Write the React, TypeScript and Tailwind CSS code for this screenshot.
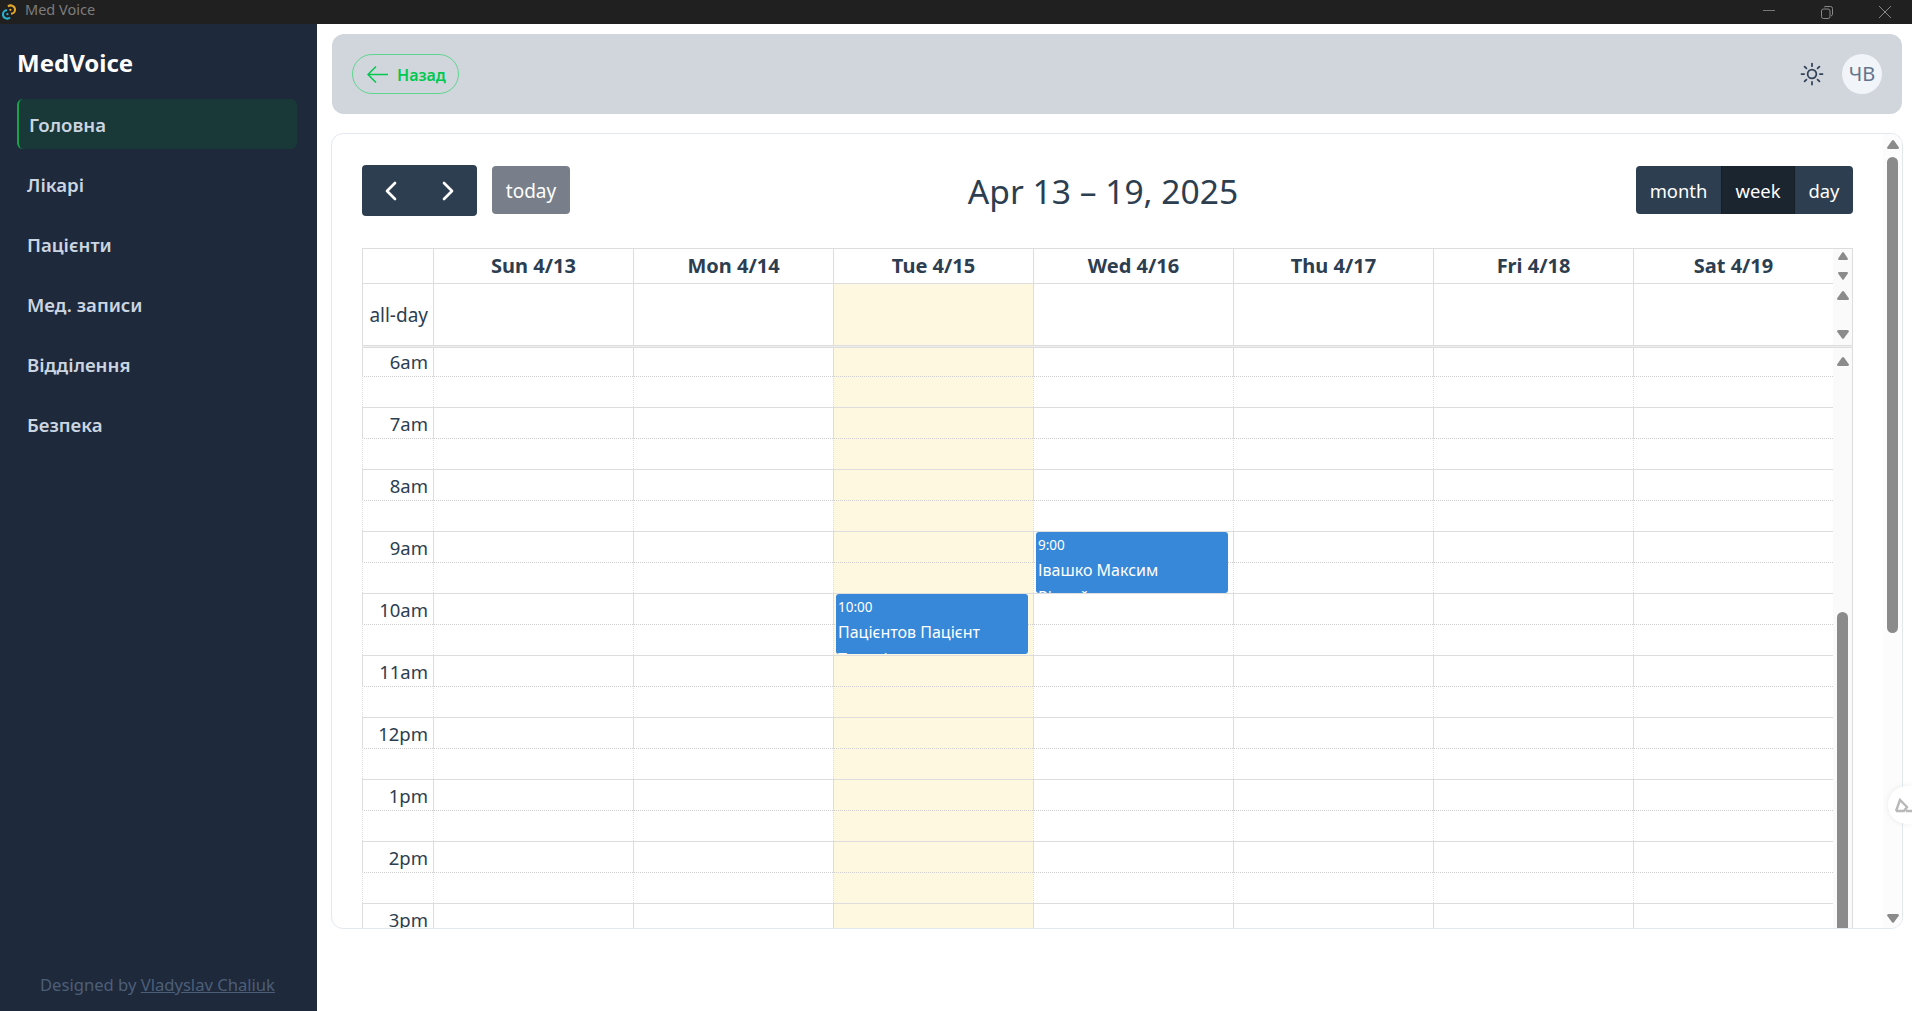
import { ChevronLeft, ChevronRight } from "lucide-react";

const menu = ["Лікарі", "Пацієнти", "Мед. записи", "Відділення", "Безпека"];
const days = ["Sun 4/13", "Mon 4/14", "Tue 4/15", "Wed 4/16", "Thu 4/17", "Fri 4/18", "Sat 4/19"];
const hours = ["6am", "7am", "8am", "9am", "10am", "11am", "12pm", "1pm", "2pm", "3pm"];
const todayIndex = 2;

const Arrow = ({ down, w = 12, h = 9 }: { down?: boolean; w?: number; h?: number }) => (
    <svg width={w} height={h} viewBox="0 0 12 9" className="shrink-0 fill-[#8b8b8b]" preserveAspectRatio="none">
        <path d={down ? "M0 1.5Q0 0 1.5 0H10.5Q12 0 12 1.5L6.8 8.5Q6 9 5.2 8.5Z" : "M6 0Q6.5 0 7 .6L12 7.5Q12 9 10.5 9H1.5Q0 9 0 7.5L5 .6Q5.5 0 6 0Z"} />
    </svg>
);

const EventCard = ({ time, title, sub, h }: { time: string; title: string; sub: string; h: string }) => (
    <div className={`absolute top-0 left-[2px] w-[192px] z-10 ${h} bg-[#3788d8] rounded-[3px] overflow-hidden text-white px-[2px] pt-[2px]`}>
        <div className="text-[13.5px] leading-[20px] mt-[1px]">{time}</div>
        <div className="text-[16px] leading-[24px] mt-[3px]">{title}</div>
        <div className="text-[16px] leading-[24px] mt-[3px]">{sub}</div>
    </div>
);

const Slot = ({ label, half, index }: { label?: string; half?: boolean; index: number }) => {
    const line = half ? "border-t border-dotted border-t-[#cfcfcf]" : "border-t border-t-[#dddddd]";
    return (
        <div className="flex h-[31px]">
            <div className={`w-[71px] shrink-0 border-l border-l-[#dddddd] ${line} text-right pr-[5px] pt-[1px] text-[18.5px] leading-[30px] text-[#2c3e50]`}>{label}</div>
            {days.map((d, i) => (
                <div key={d} className={`relative w-[200px] shrink-0 border-l border-l-[#dddddd] ${line} ${i === todayIndex ? "bg-[#fff8e0]" : ""}`}>
                    {index === 6 && i === 3 && <EventCard time="9:00" title="Івашко Максим" sub="Різний" h="h-[61px]" />}
                    {index === 8 && i === 2 && <EventCard time="10:00" title="Пацієнтов Пацієнт" sub="Терапія" h="h-[60px]" />}
                </div>
            ))}
        </div>
    );
};

export default function App() {
    return (
        <div className="h-screen flex flex-col overflow-hidden bg-white font-['Noto_Sans',sans-serif]">
            {/* window title bar */}
            <div className="h-6 shrink-0 bg-[#202020] flex items-center justify-between">
                <div className="flex items-center">
                    <svg width="16" height="16" viewBox="0 0 16 16" fill="none" strokeWidth="2" className="ml-[1px]">
                        <path d="M7 2.5a4.2 4.2 0 0 1 7 3.2c0 2.3-1.8 4-4 4" stroke="#e8a92c" />
                        <path d="M9 13.5a4.2 4.2 0 0 1-7-3.2c0-2.3 1.8-4 4-4" stroke="#25b6d2" />
                        <circle cx="9.4" cy="5.8" r="1.1" fill="#e8a92c" />
                        <circle cx="6.4" cy="10.2" r="1.1" fill="#25b6d2" />
                    </svg>
                    <span className="ml-2 text-[14.5px] leading-[20px] pb-[7px] text-[#7d7d7d]">Med Voice</span>
                </div>
                <div className="flex items-center gap-[46px] pr-[21px]">
                    <svg width="12" height="12" viewBox="0 0 12 12" stroke="#777" fill="none"><path d="M0 4.5H12" /></svg>
                    <svg width="12" height="13" viewBox="0 0 12 13" stroke="#888" fill="none"><rect x=".5" y="3" width="8.5" height="9.5" rx="2" /><path d="M3 1.2Q3.5.5 5 .5H9.5Q11.5.5 11.5 2.5V8Q11.5 9.5 10 10" /></svg>
                    <svg width="12" height="12" viewBox="0 0 12 12" stroke="#888" fill="none"><path d="M0 0L12 12M12 0L0 12" /></svg>
                </div>
            </div>

            <div className="flex flex-1 min-h-0">
                {/* sidebar */}
                <aside className="w-[317px] shrink-0 bg-[#1e293b] flex flex-col pl-[17px] pr-[20px] pt-[23px]">
                    <h1 className="text-2xl font-bold text-white leading-8 mb-[20px]">MedVoice</h1>
                    <div className="flex flex-col gap-[10px]">
                        <div className="h-[50px] flex items-center rounded-md border-l-2 border-[#16a34a] bg-[#193838] pl-[10px] pt-[2px] text-[18.6px] font-semibold text-[#cbd5e1]">Головна</div>
                        {menu.map((m) => (
                            <div key={m} className="h-[50px] flex items-center pl-[10px] pt-[2px] text-[18.6px] font-semibold text-[#cbd5e1]">{m}</div>
                        ))}
                    </div>
                    <div className="mt-auto pb-[12px] pl-[23px] text-[16.6px] leading-7 text-[#4d5f78] whitespace-nowrap">
                        Designed by <a className="underline">Vladyslav Chaliuk</a>
                    </div>
                </aside>

                <main className="relative flex-1 min-w-0 pl-[15px] pr-[10px] pt-[10px]">
                    {/* header */}
                    <header className="h-20 rounded-xl bg-[#d1d5dc] flex items-center justify-between px-5">
                        <button className="h-10 w-[107px] rounded-full border border-[#5fd68f] flex items-center pl-[14px] text-[#00c950] text-[16px] font-semibold">
                            <svg width="24" height="24" viewBox="0 0 24 24" fill="none" stroke="currentColor" strokeWidth="1.5" className="-ml-[1px]">
                                <path d="M10 20.5L2 12.5L10 4.5M2 12.5H22" />
                            </svg>
                            <span className="ml-[7px] pt-[2px]">Назад</span>
                        </button>
                        <div className="flex items-center gap-4">
                            <svg width="28" height="28" viewBox="0 0 24 24" fill="none" stroke="#314158" strokeWidth="1.5" strokeLinecap="round">
                                <path d="M12 3v2.25m6.364.386-1.591 1.591M21 12h-2.25m-.386 6.364-1.591-1.591M12 18.75V21m-4.773-4.227-1.591 1.591M5.25 12H3m4.227-4.773L5.636 5.636M15.75 12a3.75 3.75 0 1 1-7.5 0 3.75 3.75 0 0 1 7.5 0Z" />
                            </svg>
                            <div className="h-10 w-10 rounded-full bg-[#f1f5f9] flex items-center justify-center text-[20px] text-[#62748e]">ЧВ</div>
                        </div>
                    </header>

                    {/* calendar card */}
                    <section className="mt-[19px] -ml-px -mr-px h-[796px] rounded-xl border border-[#e2e8f0] overflow-hidden flex">
                        <div className="flex-1 min-w-0 pl-[30px] pr-[30px] pt-[31px]">
                            <div className="h-[51px] mb-[32px] flex items-start justify-between text-white">
                                <div className="flex items-start gap-[15px]">
                                    <div className="h-[51px] w-[115px] rounded bg-[#2c3e50] flex items-center">
                                        <div className="w-[57px] flex justify-center pl-[1px]"><ChevronLeft size={32} strokeWidth={2} /></div>
                                        <div className="w-[57px] flex justify-center pl-[1px]"><ChevronRight size={32} strokeWidth={2} /></div>
                                    </div>
                                    <div className="mt-px h-[48px] w-[78px] rounded bg-[#787f8a] flex items-center justify-center text-[19px] pt-[3px]">today</div>
                                </div>
                                <h2 className="text-[33.6px] leading-[51px] pt-[1px] text-[#2c3e50] whitespace-nowrap">Apr 13 – 19, 2025</h2>
                                <div className="mt-px h-[48px] w-[217px] rounded bg-[#2c3e50] flex items-center text-[18.4px] overflow-hidden">
                                    <div className="w-[85px] text-center pt-[1px]">month</div>
                                    <div className="w-[74px] h-full flex items-center justify-center pt-[1px] bg-[#1a252f] border-x border-[#151e27]">week</div>
                                    <div className="flex-1 text-center pt-[1px]">day</div>
                                </div>
                            </div>

                            {/* grid */}
                            <div className="border-t border-[#dddddd]">
                                <div className="flex h-[35px]">
                                    <div className="w-[71px] shrink-0 border-l border-b border-[#dddddd]" />
                                    {days.map((d) => (
                                        <div key={d} className="w-[200px] shrink-0 border-l border-b border-[#dddddd] flex items-center justify-center text-[20px] font-bold text-[#2c3e50]">{d}</div>
                                    ))}
                                    <div className="w-[20px] shrink-0 border-r border-[#dddddd] bg-[#fafafa] flex flex-col items-center pt-[3px] gap-[12px]">
                                        <Arrow w={10} h={8} />
                                        <Arrow down w={10} h={8} />
                                    </div>
                                </div>
                                <div className="flex h-[61px]">
                                    <div className="w-[71px] shrink-0 border-l border-[#dddddd] flex items-center justify-end pr-[5px] pt-[1px] text-[19px] text-[#2c3e50]">all-day</div>
                                    {days.map((d, i) => (
                                        <div key={d} className={`w-[200px] shrink-0 border-l border-[#dddddd] ${i === todayIndex ? "bg-[#fff8e0]" : ""}`} />
                                    ))}
                                    <div className="w-[20px] shrink-0 border-r border-[#dddddd] bg-[#fafafa] flex flex-col items-center justify-between pt-[7px] pb-[6px]">
                                        <Arrow />
                                        <Arrow down />
                                    </div>
                                </div>
                                <div className="h-[3px] border-y border-[#dddddd] bg-[#eeeeee]" />
                                <div className="flex h-[580px] overflow-hidden">
                                    <div className="-mt-[3px]">
                                        {hours.map((h, i) => (
                                            <div key={h}>
                                                <Slot label={h} index={i * 2} />
                                                <Slot half index={i * 2 + 1} />
                                            </div>
                                        ))}
                                    </div>
                                    <div className="w-[20px] shrink-0 border-r border-[#dddddd] bg-[#fafafa] flex flex-col items-center pt-[9px]">
                                        <Arrow />
                                        <div className="mt-[246px] w-[11px] flex-1 bg-[#8b8b8b] rounded-t-full" />
                                    </div>
                                </div>
                            </div>
                        </div>

                        {/* card scrollbar */}
                        <div className="w-[19px] shrink-0 bg-[#fcfcfc] flex flex-col items-center pt-[6px] pb-[5px]">
                            <Arrow />
                            <div className="mt-[8px] w-[11px] h-[476px] bg-[#8b8b8b] rounded-full" />
                            <div className="mt-auto"><Arrow down /></div>
                        </div>
                    </section>

                    {/* floating browser widget */}
                    <div className="absolute right-0 top-[762px] h-[38px] w-[24px] rounded-l-full bg-white shadow-[0_0_6px_rgba(0,0,0,0.08)] flex items-center overflow-hidden">
                        <svg width="18" height="16" viewBox="0 0 18 16" fill="none" stroke="#b9b9b9" strokeWidth="2.4" className="ml-[7px] shrink-0">
                            <path d="M1 14L5 3L12 10L9 14H1M11 14H18" />
                        </svg>
                    </div>
                </main>
            </div>
        </div>
    );
}
